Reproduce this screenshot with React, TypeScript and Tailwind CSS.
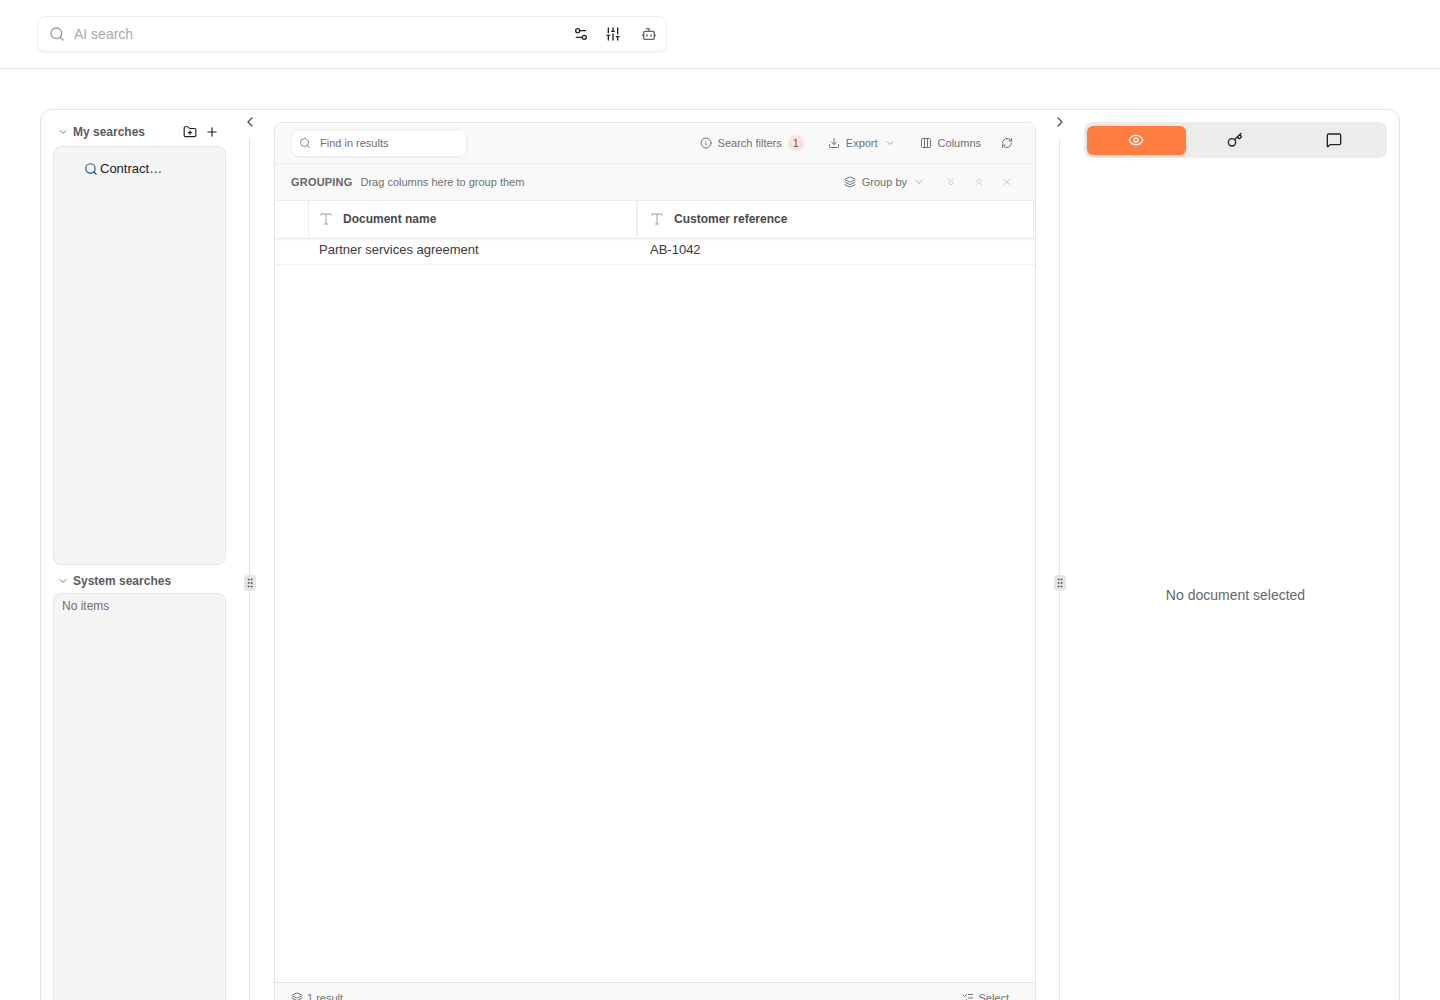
import {
  Bot,
  ChevronDown,
  ChevronLeft,
  ChevronRight,
  ChevronsDown,
  ChevronsUp,
  Columns3,
  Download,
  Eye,
  FolderPlus,
  GripVertical,
  Info,
  Key,
  Layers,
  ListChecks,
  MessageSquare,
  Plus,
  RefreshCw,
  Search,
  Settings2,
  SlidersVertical,
  X,
} from "lucide-react"

function TypeIcon() {
  return (
    <svg width="14" height="14" viewBox="0 0 14 14" fill="none" stroke="#a0a0a0" strokeWidth="1" className="shrink-0">
      <path d="M2 3.5V2h10v1.5M7 2v10M5 12h4" />
    </svg>
  )
}

function Splitter({ side }: { side: "left" | "right" }) {
  return (
    <div className="relative w-px shrink-0">
      <div className="absolute -left-[6px] top-[4px] flex w-[13px] justify-center text-[#555]">
        {side === "left" ? <ChevronLeft className="size-4 shrink-0" /> : <ChevronRight className="size-4 shrink-0" />}
      </div>
      <div className="absolute left-0 top-[28px] h-[900px] w-px bg-[#e5e5e5]" />
      <div className="absolute -left-[5px] top-[465px] flex h-4 w-3 items-center justify-center rounded-sm bg-[#e5e5e5] text-[#555]">
        <GripVertical className="size-3" />
      </div>
    </div>
  )
}

function SectionHeader({ label, children }: { label: string; children?: React.ReactNode }) {
  return (
    <div className="flex h-6 items-center pl-1 pr-[6px]">
      <ChevronDown className="size-3 text-[#777]" />
      <span className="ml-1 text-xs font-bold text-[#5c5c5c]">{label}</span>
      {children}
    </div>
  )
}

function SearchesColumn() {
  return (
    <div className="w-[208px] shrink-0 px-3 pt-[10px]">
      <SectionHeader label="My searches">
        <div className="ml-[38px] flex items-center gap-2 text-[#222]">
          <FolderPlus className="size-[14px]" />
          <Plus className="size-[14px]" />
        </div>
      </SectionHeader>
      <div className="mt-[2px] h-[419px] w-[173px] rounded-lg border border-[#e6e6e6] bg-[#f5f5f5] pl-[30px] pt-[13px]">
        <div className="flex items-center gap-[2px] text-[13px] leading-[18px] text-[#222]">
          <Search className="size-[14px] text-[#1f5a80]" />
          <span>Contract…</span>
        </div>
      </div>
      <div className="mt-1">
        <SectionHeader label="System searches" />
      </div>
      <div className="h-[500px] w-[173px] rounded-lg border border-[#e6e6e6] bg-[#f5f5f5] px-2 pt-1 text-xs leading-4 text-[#707070]">
        No items
      </div>
    </div>
  )
}

function ResultsPanel() {
  return (
    <div className="ml-6 mt-3 flex h-[893px] w-[762px] shrink-0 flex-col overflow-hidden rounded-t-lg border border-[#e5e5e5] bg-white text-[11px] text-[#707070]">
      <div className="flex h-[41px] shrink-0 items-center border-b border-[#eeeeee] bg-[#f9f9f9] pl-4 pr-[22px]">
        <div className="flex h-7 w-[176px] items-center gap-[9px] rounded-lg border border-[#eeeeee] bg-white pl-[7px] shadow-[0_1px_2px_rgba(0,0,0,0.04)]">
          <Search className="size-[12px] text-[#888]" />
          <span>Find in results</span>
        </div>
        <div className="ml-auto flex items-center">
          <Info className="size-3" />
          <span className="ml-[6px]">Search filters</span>
          <span className="ml-[6px] flex size-4 items-center justify-center rounded-full bg-[#fbe3da] text-[10px] text-[#7a4a3a]">1</span>
          <Download className="ml-6 size-3" />
          <span className="ml-[6px]">Export</span>
          <ChevronDown className="ml-[6px] size-3 text-[#aaa]" />
          <Columns3 className="ml-6 size-3" />
          <span className="ml-[6px]">Columns</span>
          <RefreshCw className="ml-5 size-3" />
        </div>
      </div>
      <div className="flex h-[37px] shrink-0 items-center border-b border-[#eeeeee] bg-[#f9f9f9] pl-4 pr-[22px]">
        <span className="font-bold tracking-[0.2px] text-[#666]">GROUPING</span>
        <span className="ml-2">Drag columns here to group them</span>
        <div className="ml-auto flex items-center">
          <Layers className="size-3" />
          <span className="ml-[6px]">Group by</span>
          <ChevronDown className="ml-[6px] size-3 text-[#aaa]" />
          <ChevronsDown className="ml-5 size-3 text-[#bbb]" strokeWidth={1.5} />
          <ChevronsUp className="ml-4 size-3 text-[#bbb]" strokeWidth={1.5} />
          <X className="ml-4 size-3 text-[#bbb]" strokeWidth={1.5} />
        </div>
      </div>
      <div className="flex h-[37px] shrink-0 pr-px shadow-[0_1px_2px_rgba(0,0,0,0.12)]">
        <div className="w-[33px] shrink-0" />
        <div className="flex w-[329px] shrink-0 items-center gap-[10px] border-x border-[#eeeeee] pb-px pl-[10px]">
          <TypeIcon />
          <span className="text-xs font-bold text-[#4a4a4a]">Document name</span>
        </div>
        <div className="flex flex-1 items-center gap-[10px] border-x border-[#eeeeee] pb-px pl-3">
          <TypeIcon />
          <span className="text-xs font-bold text-[#4a4a4a]">Customer reference</span>
        </div>
      </div>
      <div className="flex h-[27px] shrink-0 items-center border-b border-[#f0f0f0] pb-[2px] text-[13px] text-[#3a3a3a]">
        <span className="ml-[44px] w-[331px]">Partner services agreement</span>
        <span>AB-1042</span>
      </div>
      <div className="flex-1" />
      <div className="flex h-8 shrink-0 items-center justify-between border-t border-[#e5e5e5] bg-[#f9f9f9] pb-px pl-4 pr-[26px]">
        <div className="flex items-center gap-1">
          <Layers className="size-3" />
          <span>1 result</span>
        </div>
        <div className="flex items-center gap-1">
          <ListChecks className="size-3" />
          <span>Select</span>
        </div>
      </div>
    </div>
  )
}

function PreviewColumn() {
  return (
    <div className="ml-6 mt-3 w-[303px] shrink-0">
      <div className="flex h-9 items-center rounded-lg bg-[#ececec] px-[3px]">
        <div className="flex h-[29px] w-[99px] items-center justify-center rounded-md bg-[#ff7d41] pr-[2px] text-white shadow-sm">
          <Eye className="size-4" />
        </div>
        <div className="flex w-[99px] items-center justify-center pr-[2px] text-[#222]">
          <Key className="size-4" />
        </div>
        <div className="flex w-[99px] items-center justify-center pr-[2px] text-[#222]">
          <MessageSquare className="size-4" />
        </div>
      </div>
      <p className="mt-[427px] text-center text-sm leading-5 text-[#666]">No document selected</p>
    </div>
  )
}

export default function App() {
  return (
    <div className="h-screen overflow-hidden bg-white font-['Liberation_Sans',Arial,sans-serif]">
      <header className="h-[69px] border-b border-[#e2e2e2] pl-[37px] pt-4">
        <div className="flex h-9 w-[630px] items-center rounded-lg border border-[#eeeeee] bg-white pl-[11px] pr-[9px] shadow-[0_1px_2px_rgba(0,0,0,0.04)]">
          <Search className="size-4 text-[#999]" />
          <span className="ml-[9px] text-sm text-[#aaa]">AI search</span>
          <div className="ml-auto flex items-center text-[#222]">
            <Settings2 className="size-4" />
            <SlidersVertical className="ml-4 size-4" />
            <Bot className="ml-5 size-4 text-[#666]" />
          </div>
        </div>
      </header>
      <main className="ml-10 mt-10 flex h-[950px] w-[1360px] rounded-t-xl border border-[#e5e5e5]">
        <SearchesColumn />
        <Splitter side="left" />
        <ResultsPanel />
        <div className="w-[23px] shrink-0" />
        <Splitter side="right" />
        <PreviewColumn />
      </main>
    </div>
  )
}
